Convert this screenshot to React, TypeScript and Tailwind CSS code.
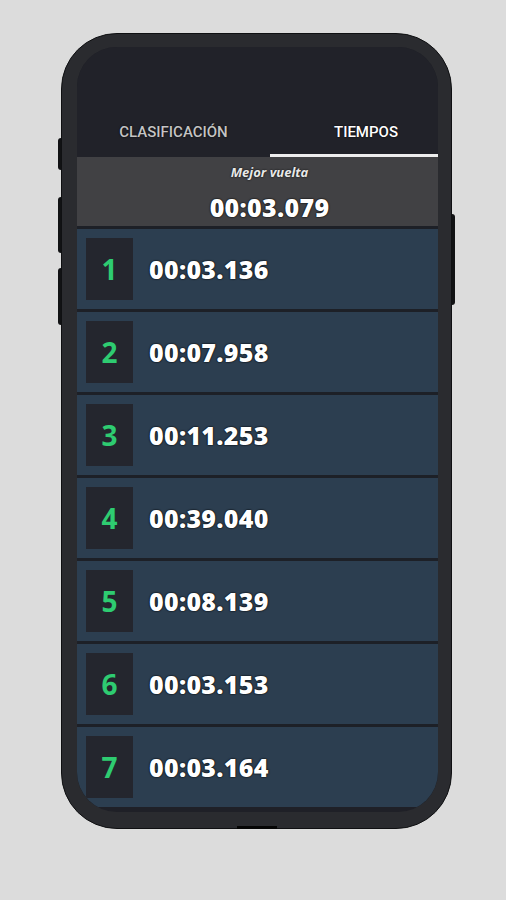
export default function App() {
  const laps = [
    "00:03.136",
    "00:07.958",
    "00:11.253",
    "00:39.040",
    "00:08.139",
    "00:03.153",
    "00:03.164",
  ];
  return (
    <div className="w-[506px] h-[900px] bg-[#dcdcdc] pt-[33px] pl-[61px]">
      <div className="relative w-[391px] h-[796px] rounded-[56px] bg-[#2a2b2f] border border-[#0f1012] pl-[15px] pr-[13px] pt-[13px] pb-[16px]">
        <div className="absolute left-[-4px] top-[104px] w-[3px] h-[32px] rounded-l-sm bg-[#111214]" />
        <div className="absolute left-[-4px] top-[163px] w-[3px] h-[56px] rounded-l-sm bg-[#111214]" />
        <div className="absolute left-[-4px] top-[234px] w-[3px] h-[57px] rounded-l-sm bg-[#111214]" />
        <div className="absolute right-[-4px] top-[180px] w-[3px] h-[91px] rounded-r-sm bg-[#111214]" />
        <div className="absolute bottom-[-1px] left-[175px] w-[40px] h-[3px] bg-[#050505]" />
        <div className="w-full h-full rounded-[40px] overflow-hidden bg-[#1f2027]">
          <div className="w-[385px]">
            <div className="h-[63px] bg-[#212229]" />
            <div className="flex h-[47px] bg-[#212229] font-['Roboto',sans-serif] font-medium text-[15px] uppercase">
              <div className="w-[193px] flex items-center justify-center border-b-[3px] border-transparent text-[#c4c4c4] [text-shadow:0_0_2px_#000]">
                CLASIFICACIÓN
              </div>
              <div className="w-[192px] flex items-center justify-center border-b-[3px] border-[#eeeeee] text-white [text-shadow:0_0_2px_#000]">
                TIEMPOS
              </div>
            </div>
            <div className="h-[69px] bg-[#414144] flex flex-col items-center pt-[6px] font-['Open_Sans',sans-serif]">
              <div className="text-[13px] leading-[18px] italic font-bold text-[#e8e8e8] [text-shadow:0_0_2px_#000]">
                Mejor vuelta
              </div>
              <div className="mt-[9px] text-[25px] leading-[34px] tracking-[0.3px] font-extrabold text-white [text-shadow:0_0_2px_#000,0_0_1px_#000]">
                00:03.079
              </div>
            </div>
            <div className="flex flex-col gap-[3px] pt-[3px] bg-[#1d2027] w-[361px]">
              {laps.map((t, i) => (
                <div
                  key={i}
                  className="h-[80px] bg-[#2c3e50] flex items-center p-[9px] font-['Open_Sans',sans-serif]"
                >
                  <div className="w-[47px] h-[62px] bg-[#24262e] flex items-center justify-center text-[28px] font-bold text-[#2ecc71]">
                    {i + 1}
                  </div>
                  <div className="ml-[16px] text-[25px] leading-[32px] tracking-[0.3px] font-extrabold text-white [text-shadow:0_0_2px_#000,0_0_1px_#000]">
                    {t}
                  </div>
                </div>
              ))}
            </div>
          </div>
        </div>
      </div>
    </div>
  );
}
